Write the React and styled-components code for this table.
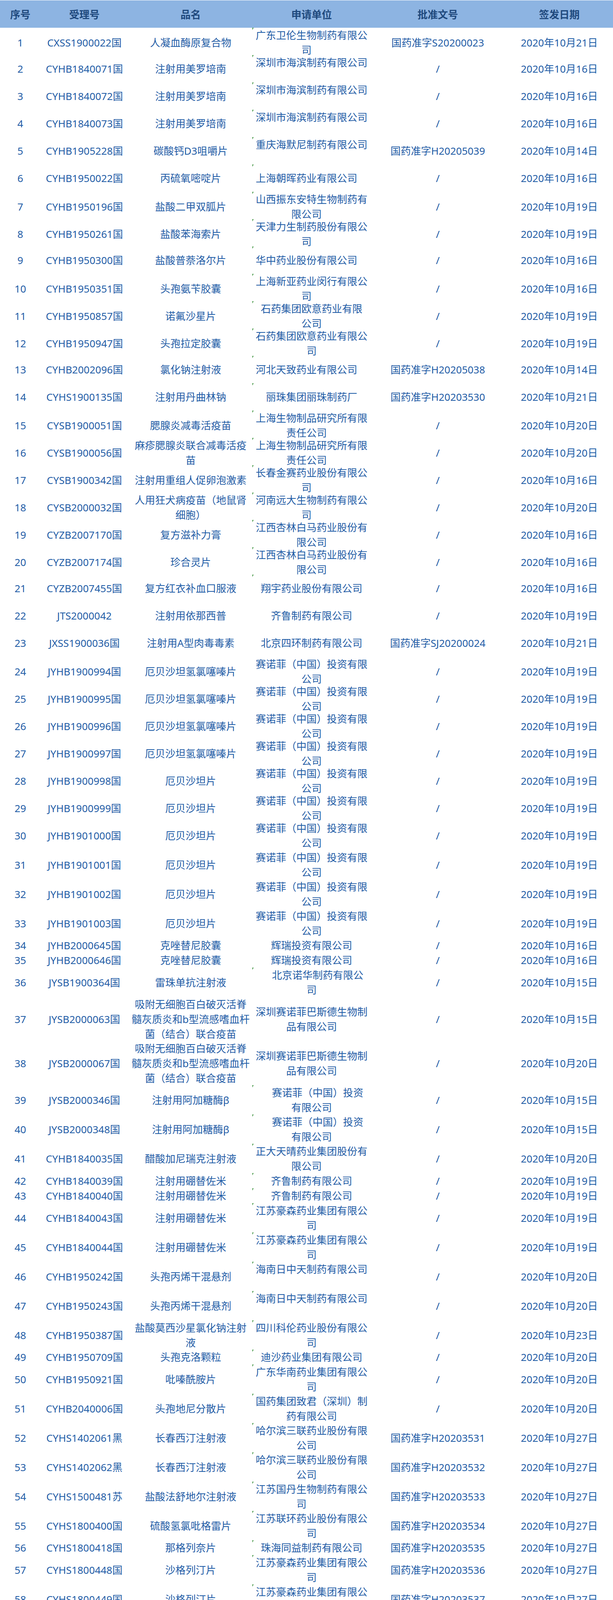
import React from "react";
import styled, { createGlobalStyle, css } from "styled-components";

const COLS = "104px 224px 320px 299px 347px 275px";

const GlobalStyle = createGlobalStyle`
  html, body {
    margin: 0;
    padding: 0;
    background: #ffffff;
  }
  body {
    font-family: "Noto Sans", "Noto Sans CJK SC", "Microsoft YaHei", sans-serif;
  }
`;

const Sheet = styled.div`
  width: 1569px;
  padding-top: 1px;
  overflow: hidden;
`;

const HeaderRow = styled.div`
  display: grid;
  grid-template-columns: ${COLS};
  height: 70px;
  background: #8db4e2;
  color: #1f497d;
  font-size: 26px;
  font-weight: 700;
`;

const HeadCell = styled.div`
  display: flex;
  align-items: center;
  justify-content: center;
`;

const Row = styled.div`
  display: grid;
  grid-template-columns: ${COLS};
  height: ${({ $h }) => $h}px;
  color: #1f5ca6;
  font-size: 26px;
  line-height: 38px;
`;

const Cell = styled.div`
  position: relative;
  display: flex;
  align-items: ${({ $top }) => ($top ? "flex-start" : "safe center")};
  justify-content: center;
  min-width: 0;
  text-align: center;
  white-space: pre-line;

  ${({ $flag }) =>
    $flag &&
    css`
      &::before {
        content: "";
        position: absolute;
        top: 0;
        left: -2px;
        border-top: 6px solid #2f8a2f;
        border-right: 3px solid transparent;
      }
    `}
`;

const Text = styled.span`
  display: block;
`;

const Ghost = styled.span`
  display: inline-block;
  width: ${({ $w }) => $w}em;
`;

const SAN = "赛诺菲（中国）投资有限\n公司";
const SH_BIO = "上海生物制品研究所有限\n责任公司";
const XL = "江西杏林白马药业股份有\n限公司";
const HS = "江苏豪森药业集团有限公\n司";
const SZ_HR = "深圳华润九新药业有\n限公司";
const DPT = "吸附无细胞百白破灭活脊\n髓灰质炎和b型流感嗜血杆\n菌（结合）联合疫苗";

// [受理号, 品名, 申请单位, 批准文号, 签发日期, options]
const rows = [
  ["CXSS1900022国", "人凝血酶原复合物", "广东卫伦生物制药有限公\n司", "国药准字S20200023", "2020年10月21日", { pad: 1 }],
  ["CYHB1840071国", "注射用美罗培南", "深圳市海滨制药有限公司", "/", "2020年10月16日", { top: true }],
  ["CYHB1840072国", "注射用美罗培南", "深圳市海滨制药有限公司", "/", "2020年10月16日", { top: true }],
  ["CYHB1840073国", "注射用美罗培南", "深圳市海滨制药有限公司", "/", "2020年10月16日", { top: true }],
  ["CYHB1905228国", "碳酸钙D3咀嚼片", "重庆海默尼制药有限公司", "国药准字H20205039", "2020年10月14日", { top: true }],
  ["CYHB1950022国", "丙硫氧嘧啶片", "上海朝晖药业有限公司", "/", "2020年10月16日", { pad: 1 }],
  ["CYHB1950196国", "盐酸二甲双胍片", "山西振东安特生物制药有\n限公司", "/", "2020年10月19日", { pad: 1 }],
  ["CYHB1950261国", "盐酸苯海索片", "天津力生制药股份有限公\n司", "/", "2020年10月19日", { pad: 1 }],
  ["CYHB1950300国", "盐酸普萘洛尔片", "华中药业股份有限公司", "/", "2020年10月16日", { pad: 1 }],
  ["CYHB1950351国", "头孢氨苄胶囊", "上海新亚药业闵行有限公\n司", "/", "2020年10月16日", { pad: 1 }],
  ["CYHB1950857国", "诺氟沙星片", "石药集团欧意药业有限\n公司", "/", "2020年10月19日"],
  ["CYHB1950947国", "头孢拉定胶囊", "石药集团欧意药业有限公\n司", "/", "2020年10月19日"],
  ["CYHB2002096国", "氯化钠注射液", "河北天致药业有限公司", "国药准字H20205038", "2020年10月14日", { pad: 1 }],
  ["CYHS1900135国", "注射用丹曲林钠", "丽珠集团丽珠制药厂", "国药准字H20203530", "2020年10月21日"],
  ["CYSB1900051国", "腮腺炎减毒活疫苗", SH_BIO, "/", "2020年10月20日", { pad: 1 }],
  ["CYSB1900056国", "麻疹腮腺炎联合减毒活疫\n苗", SH_BIO, "/", "2020年10月20日", { pad: 1 }],
  ["CYSB1900342国", "注射用重组人促卵泡激素", "长春金赛药业股份有限公\n司", "/", "2020年10月16日", { pad: 1 }],
  ["CYSB2000032国", "人用狂犬病疫苗（地鼠肾\n细胞）", "河南远大生物制药有限公\n司", "/", "2020年10月20日", { pad: 1 }],
  ["CYZB2007170国", "复方滋补力膏", XL, "/", "2020年10月16日"],
  ["CYZB2007174国", "珍合灵片", XL, "/", "2020年10月16日"],
  ["CYZB2007455国", "复方红衣补血口服液", "翔宇药业股份有限公司", "/", "2020年10月16日"],
  ["JTS2000042", "注射用依那西普", "齐鲁制药有限公司", "/", "2020年10月19日", { noflag: true }],
  ["JXSS1900036国", "注射用A型肉毒毒素", "北京四环制药有限公司", "国药准字SJ20200024", "2020年10月21日", { noflag: true }],
  ["JYHB1900994国", "厄贝沙坦氢氯噻嗪片", SAN, "/", "2020年10月19日", { noflag: true }],
  ["JYHB1900995国", "厄贝沙坦氢氯噻嗪片", SAN, "/", "2020年10月19日", { noflag: true }],
  ["JYHB1900996国", "厄贝沙坦氢氯噻嗪片", SAN, "/", "2020年10月19日", { noflag: true }],
  ["JYHB1900997国", "厄贝沙坦氢氯噻嗪片", SAN, "/", "2020年10月19日", { noflag: true }],
  ["JYHB1900998国", "厄贝沙坦片", SAN, "/", "2020年10月19日", { noflag: true }],
  ["JYHB1900999国", "厄贝沙坦片", SAN, "/", "2020年10月19日", { noflag: true }],
  ["JYHB1901000国", "厄贝沙坦片", SAN, "/", "2020年10月19日", { noflag: true }],
  ["JYHB1901001国", "厄贝沙坦片", SAN, "/", "2020年10月19日", { noflag: true }],
  ["JYHB1901002国", "厄贝沙坦片", SAN, "/", "2020年10月19日", { noflag: true }],
  ["JYHB1901003国", "厄贝沙坦片", SAN, "/", "2020年10月19日", { noflag: true }],
  ["JYHB2000645国", "克唑替尼胶囊", "辉瑞投资有限公司", "/", "2020年10月16日", { noflag: true, h: 38 }],
  ["JYHB2000646国", "克唑替尼胶囊", "辉瑞投资有限公司", "/", "2020年10月16日", { noflag: true, h: 38 }],
  ["JYSB1900364国", "雷珠单抗注射液", "北京诺华制药有限公\n司", "/", "2020年10月15日", { lead: 1.2 }],
  ["JYSB2000063国", DPT, "深圳赛诺菲巴斯德生物制\n品有限公司", "/", "2020年10月15日", { noflag: true, h: 113 }],
  ["JYSB2000067国", DPT, "深圳赛诺菲巴斯德生物制\n品有限公司", "/", "2020年10月20日", { noflag: true, h: 113 }],
  ["JYSB2000346国", "注射用阿加糖酶β", "赛诺菲（中国）投资\n有限公司", "/", "2020年10月15日", { lead: 1.2 }],
  ["JYSB2000348国", "注射用阿加糖酶β", "赛诺菲（中国）投资\n有限公司", "/", "2020年10月15日", { lead: 1.2 }],
  ["CYHB1840035国", "醋酸加尼瑞克注射液", "正大天晴药业集团股份有\n限公司", "/", "2020年10月20日", { pad: 1 }],
  ["CYHB1840039国", "注射用硼替佐米", "齐鲁制药有限公司", "/", "2020年10月19日", { h: 39 }],
  ["CYHB1840040国", "注射用硼替佐米", "齐鲁制药有限公司", "/", "2020年10月19日", { h: 38 }],
  ["CYHB1840043国", "注射用硼替佐米", HS, "/", "2020年10月19日"],
  ["CYHB1840044国", "注射用硼替佐米", HS, "/", "2020年10月19日"],
  ["CYHB1950242国", "头孢丙烯干混悬剂", "海南日中天制药有限公司", "/", "2020年10月20日", { top: true }],
  ["CYHB1950243国", "头孢丙烯干混悬剂", "海南日中天制药有限公司", "/", "2020年10月20日", { top: true }],
  ["CYHB1950387国", "盐酸莫西沙星氯化钠注射\n液", "四川科伦药业股份有限公\n司", "/", "2020年10月23日"],
  ["CYHB1950709国", "头孢克洛颗粒", "迪沙药业集团有限公司", "/", "2020年10月20日", { h: 38 }],
  ["CYHB1950921国", "吡嗪酰胺片", "广东华南药业集团有限公\n司", "/", "2020年10月20日"],
  ["CYHB2040006国", "头孢地尼分散片", "国药集团致君（深圳）制\n药有限公司", "/", "2020年10月20日"],
  ["CYHS1402061黑", "长春西汀注射液", "哈尔滨三联药业股份有限\n公司", "国药准字H20203531", "2020年10月27日", { pad: 1 }],
  ["CYHS1402062黑", "长春西汀注射液", "哈尔滨三联药业股份有限\n公司", "国药准字H20203532", "2020年10月27日", { pad: 1 }],
  ["CYHS1500481苏", "盐酸法舒地尔注射液", "江苏国丹生物制药有限公\n司", "国药准字H20203533", "2020年10月27日", { pad: 2 }],
  ["CYHS1800400国", "硫酸氢氯吡格雷片", "江苏联环药业股份有限公\n司", "国药准字H20203534", "2020年10月27日"],
  ["CYHS1800418国", "那格列奈片", "珠海同益制药有限公司", "国药准字H20203535", "2020年10月27日", { h: 38 }],
  ["CYHS1800448国", "沙格列汀片", HS, "国药准字H20203536", "2020年10月27日"],
  ["CYHS1800449国", "沙格列汀片", HS, "国药准字H20203537", "2020年10月27日"],
  ["CYHS1900091国", "洛索洛芬钠片", "湖南九典制药股份有限公\n司", "国药准字H20203538", "2020年10月27日", { pad: 1 }],
  ["CYHS1900117国", "恩曲他滨替诺福韦片", "安徽贝克生物制药有限公\n司", "国药准字H20203539", "2020年10月27日", { pad: 1 }],
  ["CYHS1900441国", "左氧氟沙星片", "浙江莎普爱思药业股份有\n限公司", "国药准字H20203540", "2020年10月27日"],
  ["CYHS1900528国", "培哚普利叔丁胺片", "宁波美诺华天康药业有限\n公司", "国药准字H20203541", "2020年10月27日", { pad: 1 }],
  ["CYSB1800231国", "重组人干扰素α2b阴道泡\n腾片", "北京凯因科技股份有限公\n司", "/", "2020年10月23日", { pad: 1 }],
  ["CYSB1900052国", "麻疹减毒活疫苗", SH_BIO, "/", "2020年10月20日", { pad: 1 }],
  ["CYSB1900054国", "麻疹减毒活疫苗", SH_BIO, "/", "2020年10月20日", { pad: 1 }],
  ["CYSB1900055国", "麻疹减毒活疫苗", SH_BIO, "/", "2020年10月20日", { pad: 1 }],
  ["CYZB2000568国", "宫炎平胶囊", "江苏晨牌药业集团股份有\n限公司", "/", "2020年10月20日", { pad: 1 }],
  ["CYZB2006999国", "百草妇炎清栓", "贵州长生药业有限责任公\n司", "/", "2020年10月20日"],
  ["CYZB2007171国", "灵芝糖浆", XL, "/", "2020年10月21日"],
  ["CYZB2007768国", "强力枇杷露", "红云制药（梁河）有限公\n司", "/", "2020年10月21日"],
  ["JXHS1800078国", "注射用头孢比罗酯钠", SZ_HR, "国药准字HJ20200042", "2020年10月27日", { lead: 1.2 }],
  ["JXSS2000002国", "阿替利珠单抗注射液", "罗氏（中国）投资有\n限公司", "/", "2020年9月29日", { lead: 1.2 }],
  ["JYHB2000611国", "注射用头孢比罗酯钠", SZ_HR, "/", "2020年9月21日", { lead: 1.2 }],
  ["JYHB2001443国", "尼洛替尼胶囊", "北京诺华制药有限公司", "/", "2020年10月20日", { noflag: true, h: 38 }],
  ["JYHB2001444国", "尼洛替尼胶囊", "北京诺华制药有限公司", "/", "2020年10月20日", { noflag: true, h: 38 }],
  ["JYHB2001445国", "尼洛替尼胶囊", "北京诺华制药有限公司", "/", "2020年10月20日", { noflag: true, h: 38 }],
  ["JYSB2000470国", "精蛋白人胰岛素注射液", "诺和诺德（中国）制药有\n限公司", "/", "2020年10月23日", { noflag: true }],
  ["JYSB2000471国", "精蛋白人胰岛素注射液", "诺和诺德（中国）制药有\n限公司", "/", "2020年10月23日", { noflag: true }],
];

const headers = ["序号", "受理号", "品名", "申请单位", "批准文号", "签发日期"];

// the first 29 rows sit on a 70px pitch, the rest on 75px
const rowHeight = (index, opts) => opts.h || (index < 29 ? 70 : 75);

const Company = ({ text, lead, pad }) => (
  <Text>
    {lead ? <Ghost $w={lead} /> : null}
    {text}
    {pad ? <Ghost $w={pad} /> : null}
  </Text>
);

export default function App() {
  return (
    <>
      <GlobalStyle />
      <Sheet>
        <HeaderRow>
          {headers.map((h) => (
            <HeadCell key={h}>{h}</HeadCell>
          ))}
        </HeaderRow>
        {rows.map(([code, name, company, approval, date, opts = {}], i) => (
          <Row key={code} $h={rowHeight(i, opts)}>
            <Cell>{i + 1}</Cell>
            <Cell>{code}</Cell>
            <Cell>
              <Text>{name}</Text>
            </Cell>
            <Cell $flag={!opts.noflag} $top={opts.top}>
              <Company text={company} lead={opts.lead} pad={opts.pad} />
            </Cell>
            <Cell>{approval}</Cell>
            <Cell>{date}</Cell>
          </Row>
        ))}
      </Sheet>
    </>
  );
}
